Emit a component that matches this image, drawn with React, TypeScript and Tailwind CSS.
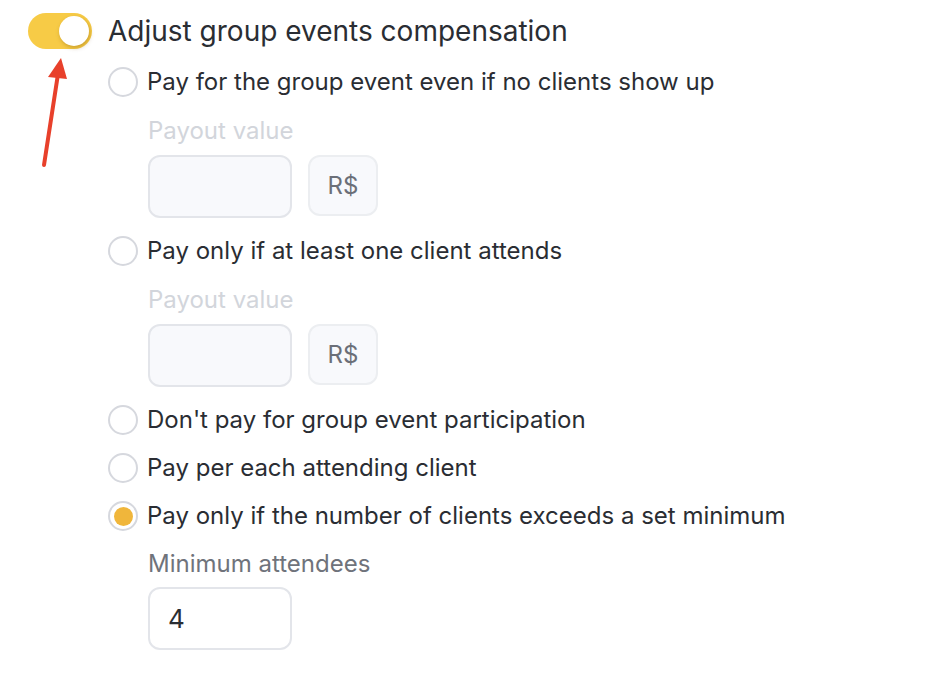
import React from "react";

function Radio({ checked }: { checked?: boolean }) {
  return (
    <span className="relative flex h-[30px] w-[30px] shrink-0 items-center justify-center rounded-full border-2 border-[#d6d8de] bg-white">
      {checked && <span className="h-[19px] w-[19px] rounded-full bg-[#f0b63b]" />}
    </span>
  );
}

function Option({ label, checked }: { label: string; checked?: boolean }) {
  return (
    <div className="flex h-[48px] items-center gap-[9px]">
      <Radio checked={checked} />
      <span className="text-[24px] leading-[30px] text-[#2a2d33]">{label}</span>
    </div>
  );
}

function Payout() {
  return (
    <div className="flex flex-col pl-[40px] pt-[1px] pb-[9px]">
      <div className="h-[48px] flex items-center text-[24px] text-[#d2d5db]">Payout value</div>
      <div className="flex gap-[16px]">
        <div className="h-[63px] w-[144px] rounded-[12px] border-2 border-[#e3e5ea] bg-[#f8f9fc]" />
        <div className="flex h-[61px] w-[70px] items-center justify-center rounded-[12px] border-2 border-[#eceef1] bg-[#f8f9fc] text-[24px] text-[#6b6f78]">
          R$
        </div>
      </div>
    </div>
  );
}

export default function App() {
  return (
    <div
      className="relative h-[684px] w-[928px] bg-white"
      style={{ fontFamily: "Inter, 'Noto Sans', sans-serif" }}
    >
      <div className="flex flex-col pl-[28px] pt-[13px]">
        <div className="flex h-[36px] items-center gap-[16px]">
          <div className="relative h-[36px] w-[64px] shrink-0 rounded-full bg-[#f7cb46]">
            <span className="absolute right-[3px] top-[3px] h-[30px] w-[30px] rounded-full bg-white shadow-[1px_2px_4px_rgba(120,80,0,0.35)]" />
          </div>
          <span className="text-[28px] leading-[36px] text-[#2a2d33]">Adjust group events compensation</span>
        </div>
        <div className="flex flex-col pl-[80px] pt-[9px]">
          <Option label="Pay for the group event even if no clients show up" />
          <Payout />
          <Option label="Pay only if at least one client attends" />
          <Payout />
          <Option label="Don't pay for group event participation" />
          <Option label="Pay per each attending client" />
          <Option label="Pay only if the number of clients exceeds a set minimum" checked />
          <div className="flex flex-col pl-[40px]">
            <div className="h-[47px] flex items-center text-[24px] text-[#6f737b]">Minimum attendees</div>
            <div className="flex h-[63px] w-[144px] items-center rounded-[12px] border-2 border-[#e3e5ea] bg-white pl-[18px] text-[26px] text-[#2a2d33]">
              4
            </div>
          </div>
        </div>
      </div>
      <svg className="absolute left-0 top-0" width="120" height="180" viewBox="0 0 120 180">
        <line x1="44" y1="165" x2="58" y2="74" stroke="#e8402b" strokeWidth="4" strokeLinecap="round" />
        <polygon points="61,58 48,77 67,79" fill="#e8402b" />
      </svg>
    </div>
  );
}
